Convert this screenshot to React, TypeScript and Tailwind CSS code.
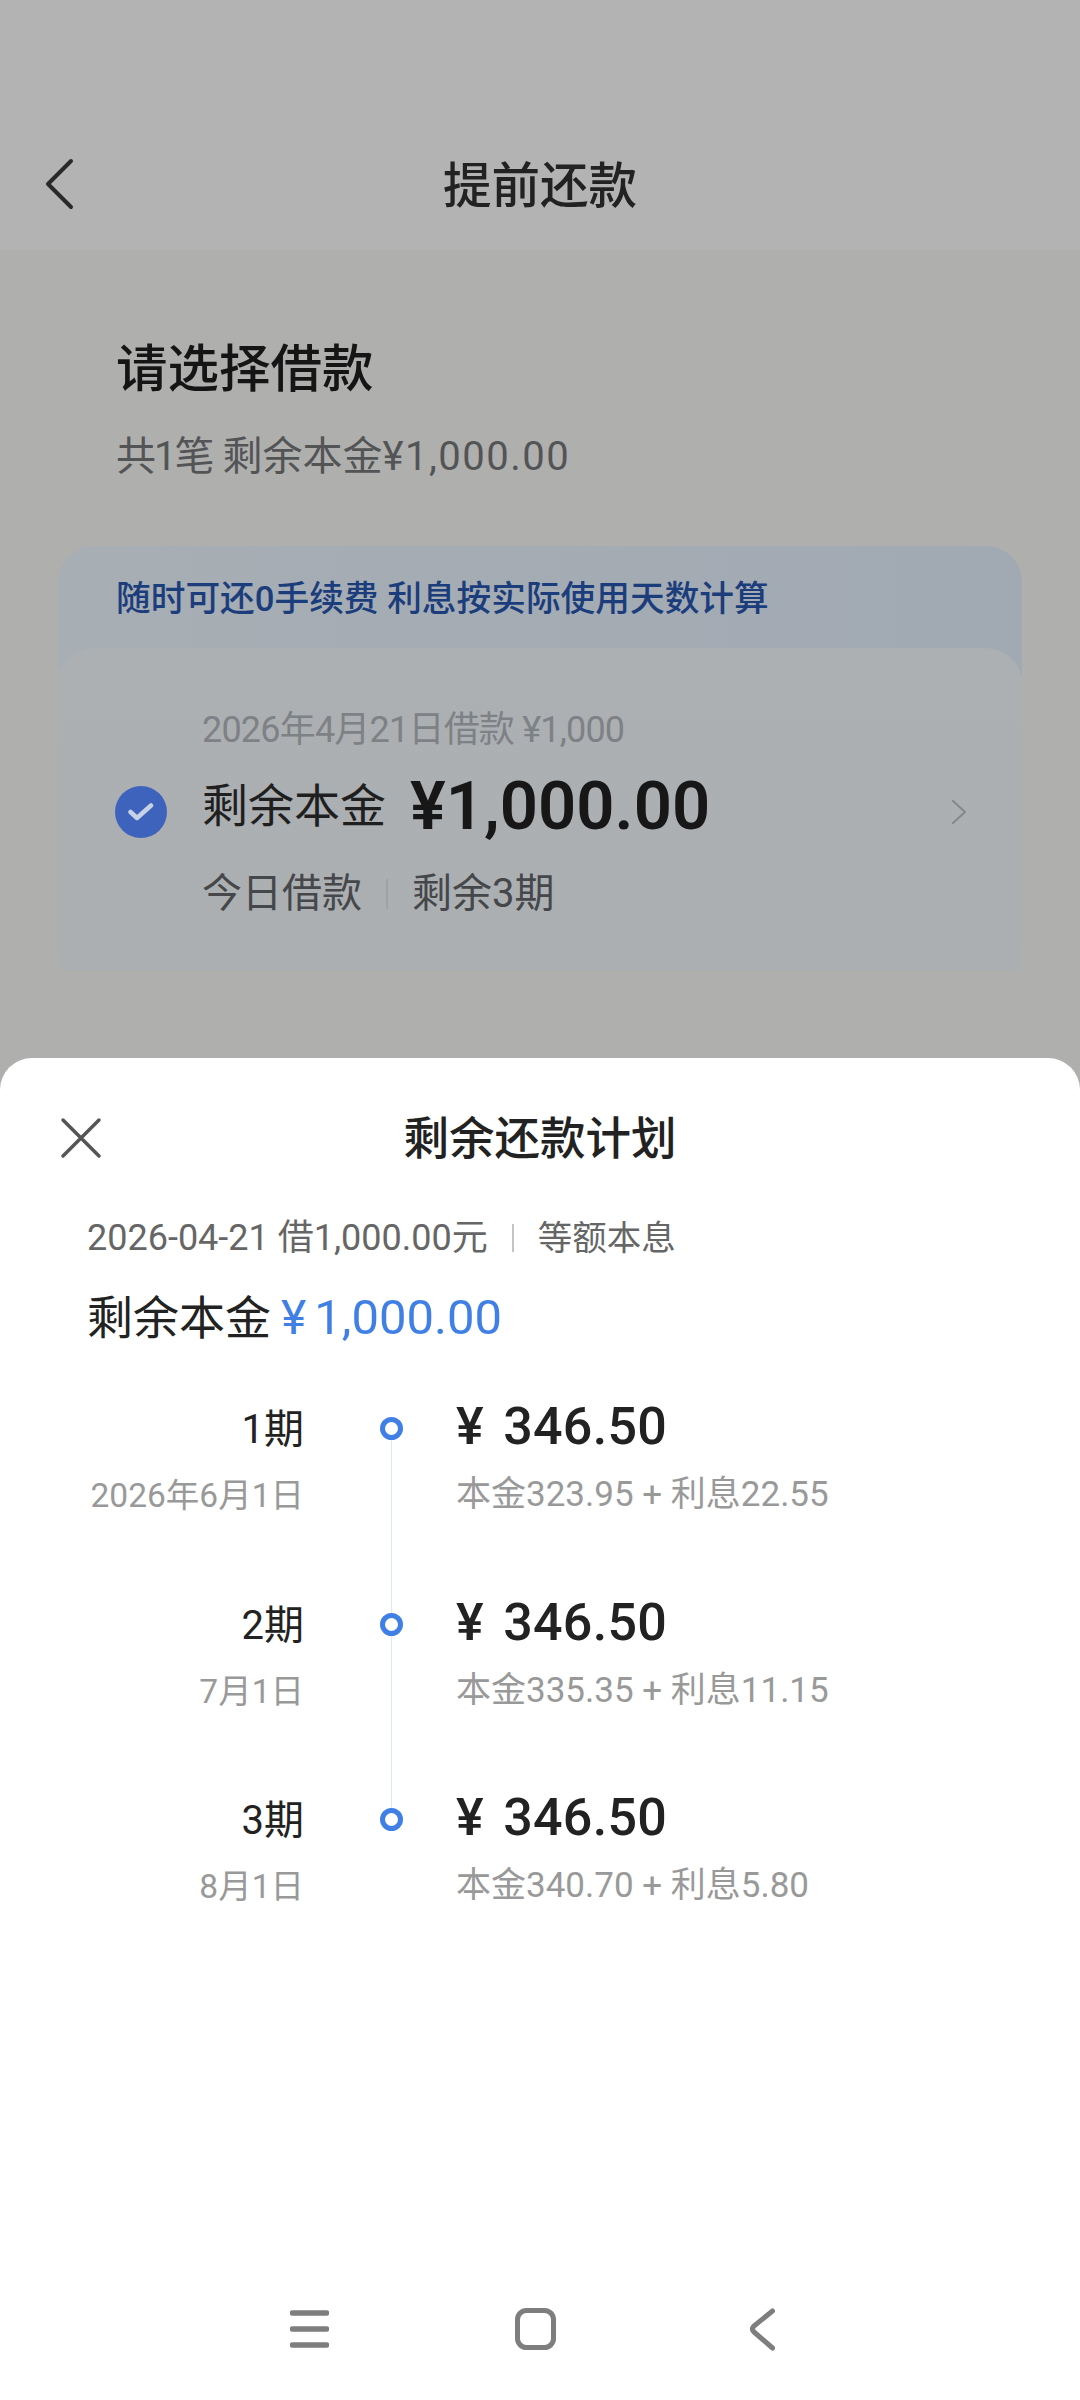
const plan = [
    { period: "1期", date: "2026年6月1日", detail: "本金323.95 + 利息22.55" },
    { period: "2期", date: "7月1日", detail: "本金335.35 + 利息11.15" },
    { period: "3期", date: "8月1日", detail: "本金340.70 + 利息5.80" },
];

function PlanRow({
    period,
    date,
    detail,
    first,
    last,
}: {
    period: string;
    date: string;
    detail: string;
    first: boolean;
    last: boolean;
}) {
    return (
        <div className="flex h-[195.5px]">
            <div className="w-[304px] shrink-0 whitespace-nowrap text-right">
                <div className="h-[48px] pt-[8px] text-[40px] leading-[48px] text-[#222222]">{period}</div>
                <div className="mt-[26px] text-[33.5px] leading-[48px] text-[#999999]">{date}</div>
            </div>
            <div className="ml-[75px] flex w-[24px] shrink-0 flex-col items-center">
                <div className={first ? "h-[19px] w-[1px] shrink-0" : "h-[19px] w-[1px] shrink-0 bg-[#dce8fa]"} />
                <div className="h-[23px] w-[23px] shrink-0 rounded-full border-[5px] border-[#3f7fe6]" />
                {!last && <div className="w-[1px] flex-1 bg-[#dce8fa]" />}
            </div>
            <div className="ml-[53px]">
                <div className="h-[60px] -translate-y-[1px] text-[52px] font-medium leading-[60px] tracking-[0.3px] text-[#222222] [word-spacing:6px]">¥ 346.50</div>
                <div className="mt-[13px] text-[35px] leading-[48px] text-[#999999]">{detail}</div>
            </div>
        </div>
    );
}

export default function App() {
    return (
        <div
            className="flex h-[2400px] w-[1080px] flex-col overflow-hidden bg-[#afafae]"
            style={{ fontFamily: 'Roboto, "Noto Sans CJK SC", sans-serif' }}
        >
            <div className="flex h-[250px] shrink-0 items-end bg-[#b3b3b3] pb-[33px]">
                <div className="relative flex h-[60px] w-full items-center justify-center">
                    <svg className="absolute left-[42px] top-[1px] h-[52px] w-[34px]" viewBox="0 0 34 52" fill="none">
                        <path d="M29 3 L6 26 L29 49" stroke="#2a2a2a" strokeWidth="4" strokeLinecap="round" strokeLinejoin="round" />
                    </svg>
                    <span className="text-[48.5px] font-medium leading-[60px] text-[#222222]">提前还款</span>
                </div>
            </div>

            <div className="h-[808px] shrink-0 overflow-hidden">
                <div className="pl-[116px] pt-[88px]">
                    <div className="text-[51.5px] font-medium leading-[64px] text-[#151515]">请选择借款</div>
                    <div className="mt-[29px] text-[40px] leading-[52px] text-[#535456]">
                        <span className="tracking-[-2px]">共1笔</span> 剩余本金<span className="tracking-[1.5px]">¥1,000.00</span>
                    </div>
                </div>

                <div className="mx-[58px] mt-[63px] h-[128px] rounded-t-[36px] bg-gradient-to-r from-[#a7aeb4] to-[#a1a9b3] pl-[58px] pt-[30px]">
                    <div className="text-[34.7px] font-medium leading-[46px] text-[#1c3d7c]">随时可还0手续费 利息按实际使用天数计算</div>
                </div>

                <div className="mx-[58px] -mt-[26px] h-[322px] rounded-t-[36px] bg-gradient-to-b from-[#acb0b3] to-[#acafb1] pt-[58px]">
                    <div className="flex items-start">
                        <div className="ml-[57px] mt-[80px] flex h-[52px] w-[52px] shrink-0 items-center justify-center rounded-full bg-[#3d63bd]">
                            <svg className="h-[26px] w-[26px]" viewBox="0 0 26 26" fill="none">
                                <path d="M2.5 13 L9 19 L23 6.5" stroke="#c8d2e6" strokeWidth="4.5" strokeLinecap="round" strokeLinejoin="round" />
                            </svg>
                        </div>
                        <div className="ml-[35px]">
                            <div className="text-[36px] leading-[48px] tracking-[-0.8px] text-[#7e8185]">2026年4月21日借款 ¥1,000</div>
                            <div className="mt-[10px] flex h-[84px] items-center">
                                <span className="text-[46px] leading-[60px] text-[#1f1f1f]">剩余本金</span>
                                <span className="ml-[24px] text-[67px] font-semibold leading-[84px] text-[#171717]">¥1,000.00</span>
                            </div>
                            <div className="mt-[20px] flex items-center text-[40px] leading-[52px] text-[#45474a]">
                                <span>今日借款</span>
                                <span className="mx-[24px] h-[30px] w-[2px] bg-[#a0a3a6]" />
                                <span>剩余3期</span>
                            </div>
                        </div>
                        <svg className="ml-auto mr-[55px] mt-[94px] h-[24px] w-[16px]" viewBox="0 0 16 24" fill="none">
                            <path d="M2 1 L14 12 L2 23" stroke="#85888a" strokeWidth="2" strokeLinecap="round" strokeLinejoin="round" />
                        </svg>
                    </div>
                </div>
            </div>

            <div className="flex flex-1 flex-col rounded-t-[32px] bg-white">
                <div className="relative mt-[50px] flex h-[60px] items-center justify-center">
                    <svg className="absolute left-[60px] top-[9px] h-[42px] w-[42px]" viewBox="0 0 42 42" fill="none">
                        <path d="M3 3 L39 39 M39 3 L3 39" stroke="#555555" strokeWidth="3.5" strokeLinecap="round" />
                    </svg>
                    <span className="pt-[4px] text-[45.5px] font-medium leading-[60px] text-[#222222]">剩余还款计划</span>
                </div>

                <div className="ml-[87px] mt-[46px] flex items-center text-[36px] leading-[48px] text-[#666666]">
                    <span>2026-04-21 借1,000.00元</span>
                    <span className="mx-[24px] h-[28px] w-[2px] bg-[#c4c4c4]" />
                    <span className="text-[34.5px]">等额本息</span>
                </div>

                <div className="ml-[87px] mt-[26px] flex h-[60px] items-center">
                    <span className="text-[46px] text-[#222222]">剩余本金</span>
                    <span className="ml-[10px] text-[48px] text-[#3f7fe6]">¥</span>
                    <span className="ml-[8px] text-[49px] text-[#3f7fe6]">1,000.00</span>
                </div>

                <div className="mt-[50px]">
                    {plan.map((row, i) => (
                        <PlanRow key={row.period} {...row} first={i === 0} last={i === plan.length - 1} />
                    ))}
                </div>

                <div className="mt-auto flex h-[95px] items-start pl-[290px]">
                    <svg className="h-[50px] w-[39px]" viewBox="0 0 39 50" fill="none" stroke="#7e7e7e" strokeLinecap="round">
                        <path d="M2.5 8 H36.5 M2.5 24 H36.5 M2.5 40 H36.5" strokeWidth="5.5" />
                    </svg>
                    <svg className="ml-[186px] h-[50px] w-[41px]" viewBox="0 0 41 50" fill="none" stroke="#7e7e7e">
                        <rect x="2.5" y="5.5" width="36" height="37" rx="9" strokeWidth="5" />
                    </svg>
                    <svg className="ml-[194px] h-[50px] w-[25px]" viewBox="0 0 25 50" fill="none" stroke="#7e7e7e" strokeLinecap="round" strokeLinejoin="round">
                        <path d="M22.5 6 L4 21 Q1 24 4 27 L22.5 43" strokeWidth="5" />
                    </svg>
                </div>
            </div>
        </div>
    );
}
